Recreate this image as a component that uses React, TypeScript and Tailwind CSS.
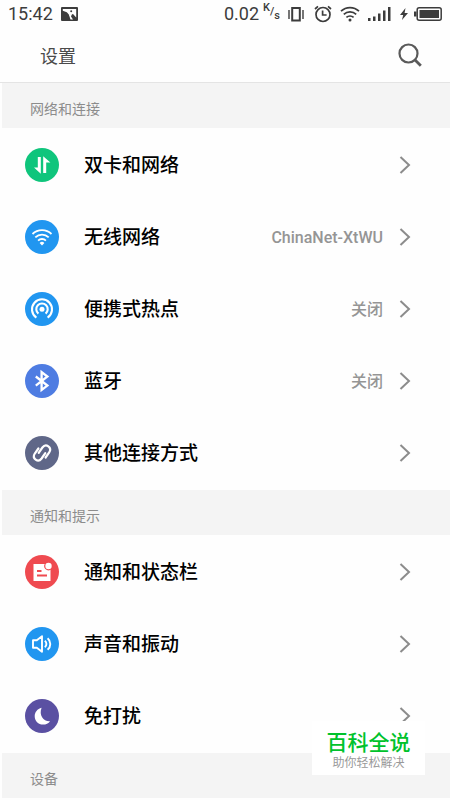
import type { ReactNode } from "react";

type SettingItem = {
  name: string;
  color: string;
  icon: ReactNode;
  value?: string;
};

type SettingGroup = {
  title: string;
  items: SettingItem[];
};

const groups: SettingGroup[] = [
  {
    title: "网络和连接",
    items: [
      {
        name: "双卡和网络",
        color: "bg-[#0fc57c]",
        icon: (
          <path
            d="M12.8 9h3v16.800L9 19.600h3.800zM21.200 25h-3V8.200l7.200 6.200h-4.200z"
            fill="currentColor"
          />
        ),
      },
      {
        name: "无线网络",
        color: "bg-[#2196f0]",
        value: "ChinaNet-XtWU",
        icon: (
          <g fill="none" stroke="currentColor" strokeWidth="1.8">
            <path d="M7.500 14a13.400 13.400 0 0 1 19 0" />
            <path d="M10.300 17.400a9.500 9.500 0 0 1 13.400 0" />
            <path d="M13.100 20.600a5.500 5.500 0 0 1 7.800 0" />
            <path d="M14.600 23a3.400 3.400 0 0 1 4.800 0L17 25.500z" fill="currentColor" stroke="none" />
          </g>
        ),
      },
      {
        name: "便携式热点",
        color: "bg-[#2196f0]",
        value: "关闭",
        icon: (
          <g fill="none" stroke="currentColor" strokeWidth="2.1">
            <path d="M11.400 25.600a10 10 0 1 1 11.200 0" />
            <path d="M13.400 21.600a5.700 5.700 0 1 1 7.200 0" />
            <circle cx="17" cy="17.200" r="2.500" fill="currentColor" stroke="none" />
          </g>
        ),
      },
      {
        name: "蓝牙",
        color: "bg-[#4e7ce2]",
        value: "关闭",
        icon: (
          <path
            d="M10.800 12.500L22.400 21.600L16.600 26V8L22.400 12.500L10.800 21.600"
            fill="none"
            stroke="currentColor"
            strokeWidth="2.3"
          />
        ),
      },
      {
        name: "其他连接方式",
        color: "bg-[#5f6788]",
        icon: (
          <g fill="none" stroke="currentColor" strokeWidth="2.2" strokeLinecap="round">
            <path d="M13.400 12.500l-3.600 5c-3.200 4.900 3.200 9.600 6.800 5l3.700-5.300" />
            <path d="M20.600 21.500l3.600-5c3.200-4.900-3.200-9.600-6.800-5l-3.700 5.300" />
          </g>
        ),
      },
    ],
  },
  {
    title: "通知和提示",
    items: [
      {
        name: "通知和状态栏",
        color: "bg-[#ef4a50]",
        icon: (
          <>
            <path d="M8.500 9h17v17h-17z" fill="currentColor" />
            <circle cx="23.500" cy="11" r="4.400" fill="#ef4a50" />
            <circle cx="23.500" cy="11" r="3.200" fill="currentColor" />
            <path d="M12 16h4.500M12 20.500h10" stroke="#ef4a50" strokeWidth="1.8" />
          </>
        ),
      },
      {
        name: "声音和振动",
        color: "bg-[#2196f0]",
        icon: (
          <g fill="none" stroke="currentColor" strokeWidth="1.9" strokeLinejoin="round">
            <path d="M17 9.200v15.600l-5.200-4H8v-7.600h3.800z" />
            <path d="M19.800 13.800a4 4 0 0 1 0 6.400" />
            <path d="M22.600 11.200a7.600 7.600 0 0 1 0 11.600" />
          </g>
        ),
      },
      {
        name: "免打扰",
        color: "bg-[#5a50a2]",
        icon: (
          <path
            d="M16.600 8.700C12.400 9.800 9.700 13.200 9.700 17.200c0 4.800 3.700 8.400 8.300 8.400 3 0 5.500-1.100 7.100-3.400-6.200.6-11.600-5.800-8.500-13.500z"
            fill="currentColor"
          />
        ),
      },
    ],
  },
  { title: "设备", items: [] },
];

function StatusBar() {
  return (
    <div className="flex h-7 items-center justify-between px-2 text-[#3c3c3c]">
      <div className="flex items-center gap-2">
        <span className="text-lg leading-7">15:42</span>
        <svg className="h-3.5 w-[17px]" viewBox="0 0 17 14">
          <rect width="17" height="14" rx="1" fill="currentColor" />
          <path d="M1.800 2h13.400v8.500L12 7 8.500 8.200 5.800 5.200 1.800 3.800z" fill="#fefefe" />
          <path d="M7.800 7.500l3.200-.5-1 2.500 2 3H9.500z" fill="#fefefe" />
          <circle cx="10.200" cy="4.200" r="1" fill="currentColor" />
        </svg>
      </div>
      <div className="flex items-center">
        <span className="text-lg leading-7">0.02</span>
        <span className="ml-1 flex text-[11px] font-medium leading-4">
          <span className="-mt-1">K</span>
          <span>/</span>
          <span className="mt-1">s</span>
        </span>
        <svg className="ml-2 h-4 w-4" viewBox="0 0 16 16" fill="none" stroke="currentColor">
          <rect x="4.200" y="2" width="7.600" height="12.500" strokeWidth="2" />
          <path d="M1 4v9M15 4v9" strokeWidth="1.400" />
        </svg>
        <svg
          className="ml-2.5 size-[18px]"
          viewBox="0 0 18 18"
          fill="none"
          stroke="currentColor"
          strokeWidth="1.700"
        >
          <circle cx="9" cy="9.500" r="7" />
          <path d="M8.600 5.500v4.500h4M1 4l3-2.600M17 4l-3-2.600" />
        </svg>
        <svg
          className="ml-2 h-4 w-5"
          viewBox="0 0 20 16"
          fill="none"
          stroke="currentColor"
          strokeWidth="1.700"
        >
          <path d="M1 5.200a13 13 0 0 1 18 0M3.800 8.400a9 9 0 0 1 12.400 0M6.400 11.400a5.300 5.300 0 0 1 7.200 0" />
          <circle cx="10" cy="14" r="1.500" fill="currentColor" stroke="none" />
        </svg>
        <svg className="ml-2 h-4 w-6" viewBox="0 0 24 16" fill="currentColor">
          <path d="M0 12h2.500v3H0zM5 10.500h2.500V15H5zM10 7.500h2.500V15H10zM15 4.500h2.500V15H15zM20 1h2.500v14H20z" />
        </svg>
        <svg className="ml-2 h-3.5 w-2" viewBox="0 0 8 14" fill="currentColor">
          <path d="M5.500 1L0 8h3.200L2 13l6-7H4.600z" />
        </svg>
        <svg className="ml-1.5 h-4 w-7" viewBox="0 0 28 16">
          <rect
            x="3.200"
            y="1.700"
            width="24"
            height="12.600"
            rx="2"
            fill="none"
            stroke="currentColor"
            strokeWidth="1.500"
          />
          <path d="M0 5.500h2.500v5H0zM5.500 4h19.500v8h-19.500z" fill="currentColor" />
        </svg>
      </div>
    </div>
  );
}

function SettingRow({ item }: { item: SettingItem }) {
  return (
    <li>
      <button type="button" className="flex h-[72px] w-full items-center pl-[25px] pr-[39px] text-left">
        <span className={`flex size-[34px] shrink-0 rounded-full text-white ${item.color}`}>
          <svg className="size-full" viewBox="0 0 34 34">
            {item.icon}
          </svg>
        </span>
        <span className="ml-[25px] flex-1 pt-0.5 text-[19px] font-medium leading-7 text-black">
          {item.name}
        </span>
        {item.value && (
          <span className="pt-0.5 text-base font-medium leading-6 text-[#959595]">
            {item.value}
          </span>
        )}
        <svg
          className="ml-4 h-[18px] w-3"
          viewBox="0 0 12 18"
          fill="none"
          stroke="#8c8c8c"
          strokeWidth="2"
        >
          <path d="M1.500 1l8.500 8-8.500 8" />
        </svg>
      </button>
    </li>
  );
}

export default function App() {
  return (
    <main className="relative min-h-screen bg-[#fefefe] font-[Roboto,'Noto_Sans_CJK_SC',sans-serif]">
      <StatusBar />
      <header className="flex h-[55px] items-center justify-between border-b border-[#e4e4e4] pl-10 pr-7">
        <h1 className="pt-1 text-lg leading-7 text-[#4a4a4a]">设置</h1>
        <button type="button" aria-label="搜索" className="text-[#5a5a5a]">
          <svg className="size-6" viewBox="0 0 24 24" fill="none" stroke="currentColor">
            <circle cx="10.500" cy="10.500" r="9" strokeWidth="2.2" />
            <path d="M16.800 16.800l6 6" strokeWidth="2.800" />
          </svg>
        </button>
      </header>

      {groups.map((group) => (
        <section key={group.title}>
          <h2 className="ml-0.5 flex h-[45px] items-center bg-[#f4f4f4] pl-7 pt-1.5 text-sm leading-5 text-[#8c8c8c]">
            {group.title}
          </h2>
          {group.items.length > 0 && (
            <ul className="py-px">
              {group.items.map((item) => (
                <SettingRow key={item.name} item={item} />
              ))}
            </ul>
          )}
        </section>
      ))}

      <div className="absolute bottom-[25px] right-[25px] flex h-[54px] w-[113px] flex-col items-center bg-white">
        <span className="pt-2.5 text-[21px] font-medium leading-6 text-[#00c22c]">百科全说</span>
        <span className="text-xs leading-4 text-[#999]">助你轻松解决</span>
      </div>
    </main>
  );
}
